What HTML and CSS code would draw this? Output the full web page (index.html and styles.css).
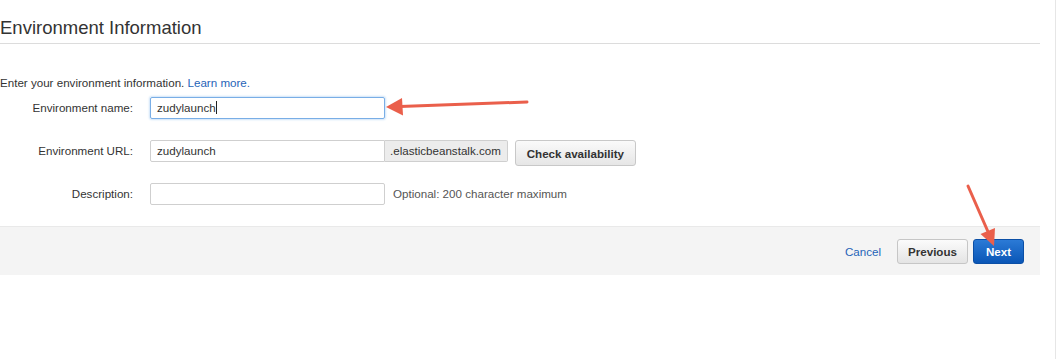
FILE: index.html
```html
<!DOCTYPE html>
<html>
	<head>
		<meta charset="UTF-8">
		<title>Environment Information</title>
		<link rel="stylesheet" href="styles.css">
	</head>
	<body>
		<div class="page">
			<div class="main">
				<h2 class="title">Environment Information</h2>
				<p class="intro">Enter your environment information. <a href="#">Learn more.</a></p>
				<div class="form">
					<div class="row">
						<label class="lbl">Environment name:</label>
						<div class="field focus">zudylaunch<span class="caret"></span></div>
					</div>
					<div class="row">
						<label class="lbl">Environment URL:</label>
						<div class="field joined">zudylaunch</div>
						<div class="addon">.elasticbeanstalk.com</div>
						<button class="btn check">Check availability</button>
					</div>
					<div class="row">
						<label class="lbl">Description:</label>
						<div class="field"></div>
						<span class="hint">Optional: 200 character maximum</span>
					</div>
				</div>
				<div class="footer">
					<a class="cancel" href="#">Cancel</a>
					<button class="btn prev">Previous</button>
					<button class="btn next">Next</button>
				</div>
			</div>
		</div>
		<svg class="marks" width="1058" height="359" viewBox="0 0 1058 359">
			<line x1="527" y1="102" x2="400" y2="106.5" stroke="#ea5f4b" stroke-width="3" stroke-linecap="round"/>
			<polygon points="386,107 402,98 403,115.5" fill="#ea5f4b"/>
			<line x1="968" y1="186" x2="989" y2="234" stroke="#ea5f4b" stroke-width="3" stroke-linecap="round"/>
			<polygon points="994,246 980.5,234 995,228" fill="#ea5f4b"/>
		</svg>
	</body>
</html>
```

FILE: styles.css
```css
body{margin: 0; background: #fff; font-family: "Liberation Sans", Arial, sans-serif; color: #333;}
.page{width: 1055px; height: 359px; border-right: 1px solid #e6e6e6;}
.main{width: 1040px;}
.title{margin: 0; padding: 17px 0 4px; font-size: 18.5px; line-height: 22px; font-weight: normal; color: #333; border-bottom: 1px solid #dcdcdc;}
.intro{margin: 0; padding-top: 32px; font-size: 11.6px; line-height: 14px;}
.intro a{color: #1f64b8; text-decoration: none;}
.form{display: flex; flex-direction: column; gap: 21px; padding-top: 7px;}
.row{display: flex; align-items: flex-start; height: 22px; font-size: 11.6px;}
.lbl{width: 133px; margin-right: 17px; text-align: right; line-height: 22px; color: #333;}
.field{height: 20px; line-height: 20px; border: 1px solid #cfcfcf; border-radius: 2px; padding-left: 6px; width: 227px; color: #333;}
.field.focus{border-color: #79aee6; box-shadow: 0 0 2px 1px #cfe3f8;}
.caret{display: inline-block; width: 1px; height: 13px; background: #222; vertical-align: -2px;}
.field.joined{border-radius: 2px 0 0 2px;}
.addon{height: 20px; line-height: 20px; padding: 0 6px 0 5px; border: 1px solid #cfcfcf; border-left: none; background: #ececec; border-radius: 0 2px 2px 0; color: #333;}
.btn{font-family: "Liberation Sans", Arial, sans-serif; font-size: 11.6px; font-weight: bold; border-radius: 3px; cursor: pointer; padding: 0;}
.check{margin-left: 7px; width: 121px; height: 26px; color: #333; border: 1px solid #c8c8c8; background: linear-gradient(#fafafa, #e6e6e6);}
.hint{margin-left: 8px; line-height: 22px; color: #555;}
.footer{display: flex; justify-content: flex-end; align-items: center; margin-top: 21px; height: 48px; padding-right: 16px; background: #f4f4f4; border-top: 1px solid #e9e9e9;}
.cancel{font-size: 11.6px; color: #1f64b8; text-decoration: none; margin-right: 16px;}
.prev{width: 71px; height: 25px; color: #333; border: 1px solid #c6c6c6; background: linear-gradient(#fbfbfb, #e4e4e4); margin-right: 5px;}
.next{width: 51px; height: 25px; color: #fff; border: 1px solid #0b4fa6; background: linear-gradient(#2b7ad6, #0a56b6);}
.marks{position: absolute; top: 0; left: 0; pointer-events: none;}
```
